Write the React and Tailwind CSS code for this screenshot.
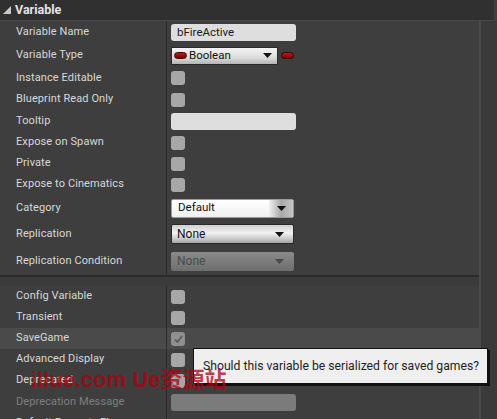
import React from 'react';

const font = "font-['Roboto','Noto_Sans',sans-serif]";

function Arrow({ color = '#111' }) {
  return (
    <svg width="9" height="5" viewBox="0 0 9 5">
      <polygon points="0,0 9,0 4.5,5" fill={color} />
    </svg>
  );
}

function Pill({ className = '' }) {
  return (
    <span
      className={`inline-block h-[7px] w-[13px] rounded-[4px] border border-[#3a0000] bg-[linear-gradient(to_bottom,#c21818,#7a0000)] ${className}`}
    />
  );
}

function Check({ checked }) {
  return (
    <div
      className={`flex h-[14px] w-[14px] items-center justify-center rounded-[3px] ${
        checked ? 'bg-[#8f8f8f]' : 'bg-[#a7a7a7]'
      }`}
    >
      {checked && (
        <svg width="9" height="8" viewBox="0 0 9 8">
          <polyline points="1,4.5 3.5,7 8,1" fill="none" stroke="#5c5c5c" strokeWidth="1.8" />
        </svg>
      )}
    </div>
  );
}

function TextBox({ value = '', disabled }) {
  return (
    <div
      className={`flex h-[17px] w-[125px] items-center rounded-[3px] px-[6px] text-[11.5px] text-[#1a1a1a] ${
        disabled ? 'bg-[#7b7b7b]' : 'bg-[#dedede]'
      }`}
    >
      {value}
    </div>
  );
}

function Combo({ value, variant }) {
  if (variant === 'category') {
    return (
      <div className="flex h-[19px] w-[123px] items-stretch overflow-hidden rounded-[2px] border border-[#9a9a9a] bg-[linear-gradient(to_bottom,#ffffff,#f0f0f0)]">
        <span className="flex flex-1 items-center pl-[6px] text-[11.5px] text-[#111]">{value}</span>
        <span className="flex w-[24px] items-center justify-center bg-[linear-gradient(to_right,#f0f0f0,#a9a9a9,#c4c4c4)]">
          <Arrow />
        </span>
      </div>
    );
  }
  if (variant === 'disabled') {
    return (
      <div className="flex h-[19px] w-[123px] items-center justify-between rounded-[2px] bg-[linear-gradient(to_bottom,#8a8a8a,#6e6e6e)] pl-[6px] pr-[10px] text-[12px] text-[#4a4a4a]">
        <span>{value}</span>
        <Arrow color="#4a4a4a" />
      </div>
    );
  }
  return (
    <div className="flex h-[20px] w-[123px] items-center justify-between rounded-[2px] border border-[#2a2a2a] bg-[linear-gradient(to_bottom,#cfcfcf,#f2f2f2_45%,#a8a8a8)] pl-[5px] pr-[9px] text-[12px] text-[#111]">
      <span>{value}</span>
      <Arrow />
    </div>
  );
}

function Row({ label, h, dim, highlight, children }) {
  return (
    <div className={`flex ${highlight ? 'bg-[#4a4a4a]' : ''}`} style={{ height: h }}>
      <div
        className={`flex w-[167px] shrink-0 items-center border-r border-[#2b2b2b] pl-[16px] text-[11px] tracking-[0.1px] ${
          dim ? 'text-[#7f7f7f]' : 'text-[#d8d8d8]'
        }`}
      >
        {label}
      </div>
      <div className="flex flex-1 items-center pl-[4px]">{children}</div>
    </div>
  );
}

export default function App() {
  return (
    <div className={`relative h-[419px] w-[497px] overflow-hidden bg-[#3e3e3e] ${font}`}>
      {/* Section header */}
      <div className="flex h-[21px] w-[494px] items-center gap-[4px] border-b border-[#474747] bg-[#303030] pl-[3px]">
        <svg width="8" height="8" viewBox="0 0 8 8">
          <polygon points="8,0 8,8 0,8" fill="#c8c8c8" />
        </svg>
        <span className="text-[12.5px] font-bold text-[#e4e4e4]">Variable</span>
      </div>

      <div className="flex">
        <div className="w-[480px] border-r border-[#4b4b4b]">
          <Row label="Variable Name" h={23}>
            <TextBox value="bFireActive" />
          </Row>
          <Row label="Variable Type" h={23}>
            <div className="flex items-center gap-[3px]">
              <div className="flex h-[18px] w-[107px] items-center justify-between border border-[#2a2a2a] bg-[linear-gradient(to_bottom,#f4f4f4,#dcdcdc_60%,#b4b4b4)] pl-[2px] pr-[5px]">
                <span className="flex items-center gap-[2px] text-[11.5px] text-[#111]">
                  <Pill />
                  Boolean
                </span>
                <Arrow />
              </div>
              <Pill />
            </div>
          </Row>
          <Row label="Instance Editable" h={22}>
            <Check />
          </Row>
          <Row label="Blueprint Read Only" h={21}>
            <Check />
          </Row>
          <Row label="Tooltip" h={22}>
            <TextBox />
          </Row>
          <Row label="Expose on Spawn" h={21}>
            <Check />
          </Row>
          <Row label="Private" h={21}>
            <Check />
          </Row>
          <Row label="Expose to Cinematics" h={21}>
            <Check />
          </Row>
          <Row label="Category" h={26}>
            <Combo value="Default" variant="category" />
          </Row>
          <Row label="Replication" h={26}>
            <Combo value="None" />
          </Row>
          <Row label="Replication Condition" h={28}>
            <Combo value="None" variant="disabled" />
          </Row>

          {/* group separator */}
          <div className="h-[11px] border-t-[2px] border-[#2a2a2a] bg-[#3b3b3b]" />

          <Row label="Config Variable" h={21}>
            <Check />
          </Row>
          <Row label="Transient" h={21}>
            <Check />
          </Row>
          <Row label="SaveGame" h={21} highlight>
            <Check checked />
          </Row>
          <Row label="Advanced Display" h={21}>
            <Check />
          </Row>
          <Row label="Deprecated" h={21}>
            <Check />
          </Row>
          <Row label="Deprecation Message" h={22} dim>
            <TextBox disabled />
          </Row>
          <Row label="Default Property Flags" h={21} />
        </div>
        <div className="flex-1 border-l border-[#484848] bg-[#3a3a3a]" />
      </div>

      {/* Hover tooltip */}
      <div className="absolute left-[193px] top-[348px] flex h-[36px] w-[295px] items-center border border-[#111] bg-[#efefef] pl-[9px] text-[12.2px] text-[#1e1e1e] shadow-[2px_2px_0_#111]">
        Should this variable be serialized for saved games?
      </div>

      {/* Watermark */}
      <div className="pointer-events-none absolute left-[31px] top-[369px] whitespace-nowrap font-['Liberation_Sans','Noto_Sans_CJK_SC',sans-serif] text-[22px] font-bold leading-none text-[#b00010] opacity-75">
        illue.com Ue资源站
      </div>
    </div>
  );
}
